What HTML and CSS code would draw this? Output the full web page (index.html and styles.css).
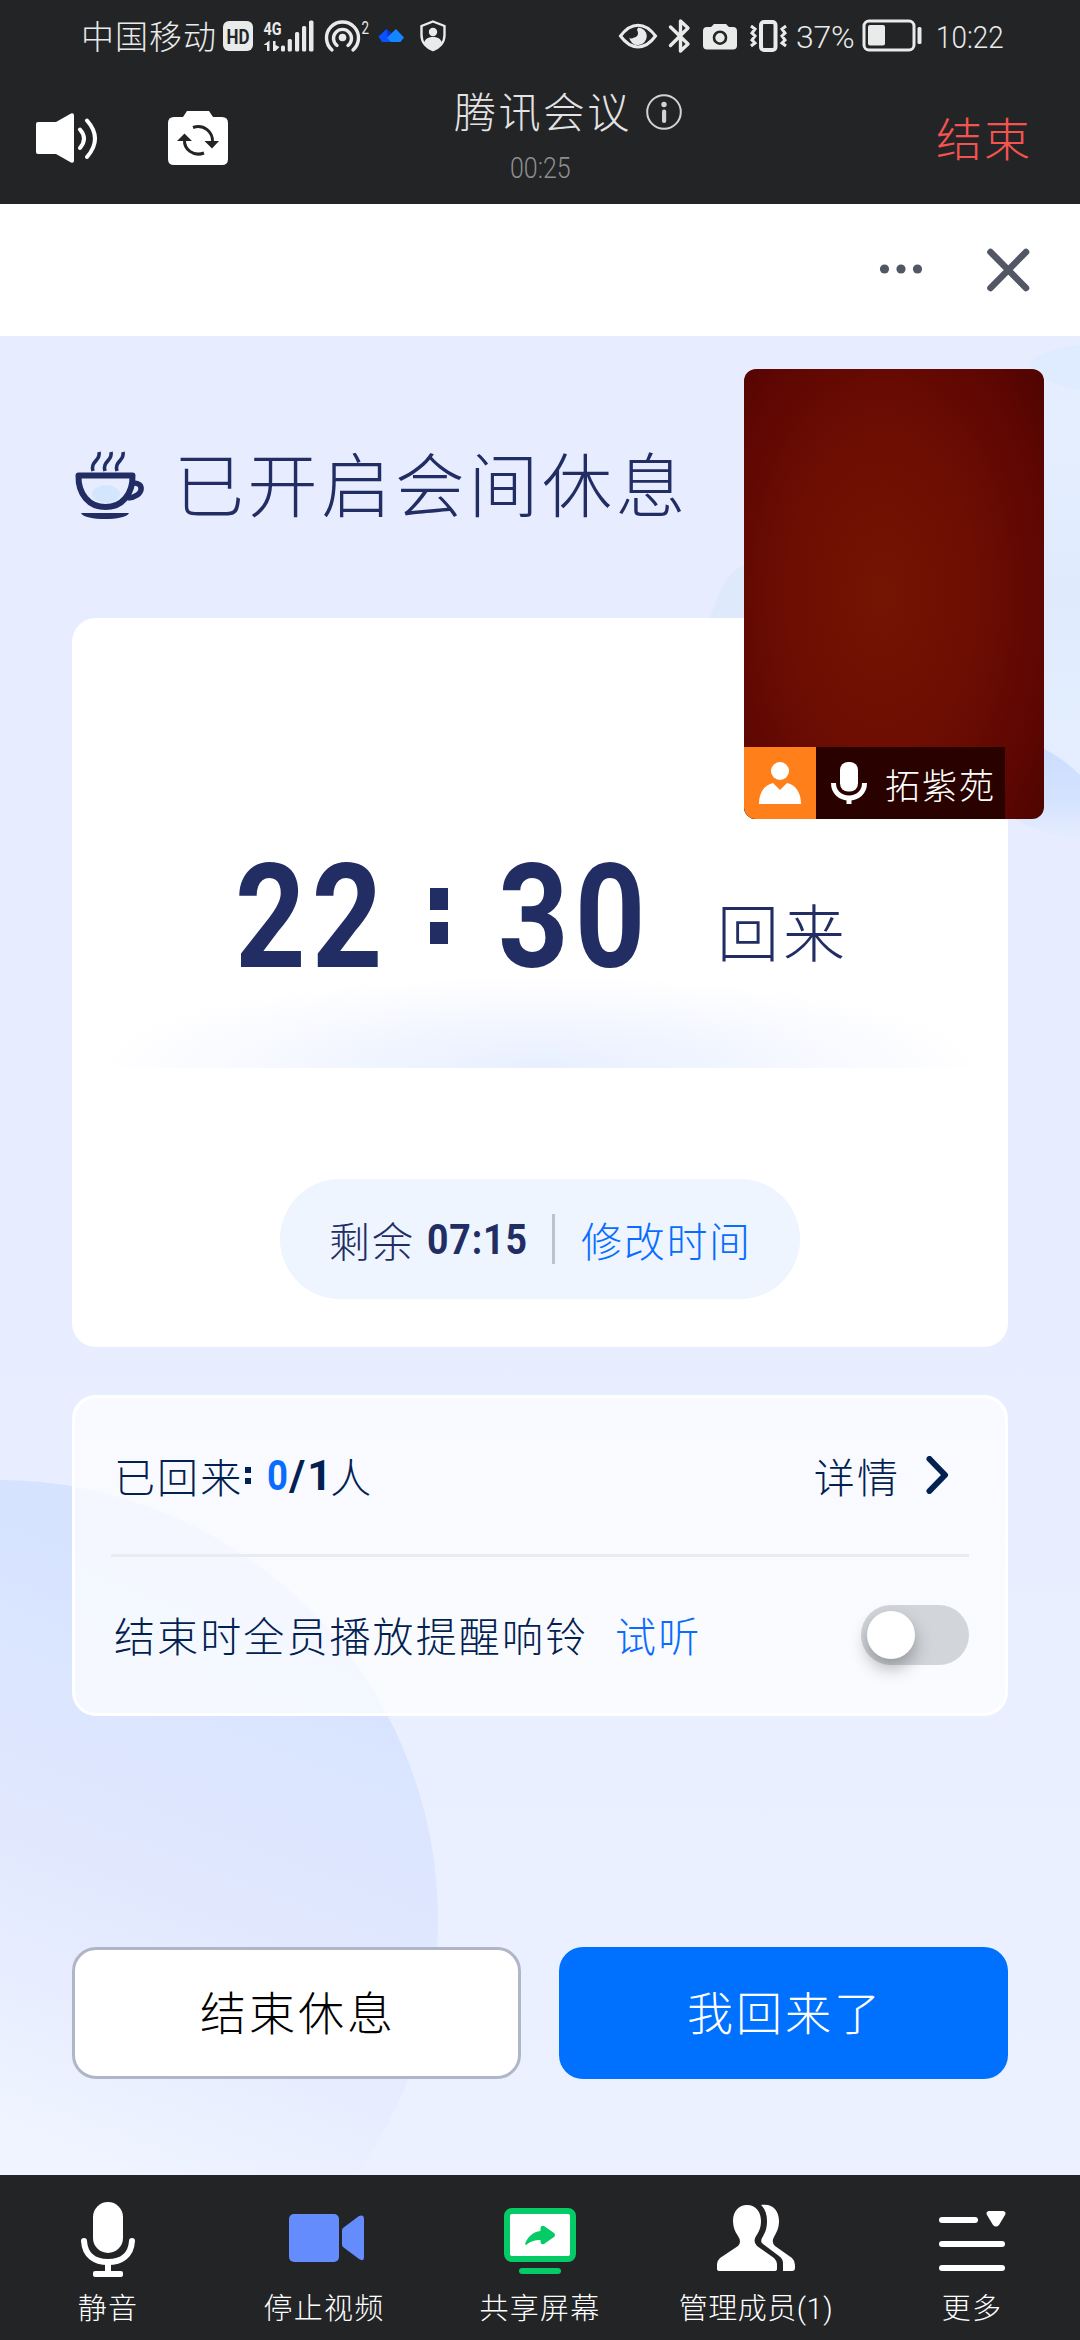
FILE: index.html
```html
<!DOCTYPE html>
<html lang="zh-CN">
<head>
<meta charset="utf-8">
<title>腾讯会议</title>
<link rel="stylesheet" href="styles.css">
</head>
<body>
<div class="screen">
  <div class="status">
    <span class="carrier">中国移动</span>
    <svg class="status-left" width="230" height="40" viewBox="220 17 230 40" fill="#e9eaea">
      <rect x="223" y="21" width="30" height="30" rx="6"/>
      <text x="238" y="43.500" class="hd" textLength="23" lengthAdjust="spacingAndGlyphs">HD</text>
      <text x="263.500" y="35" class="net" textLength="18" lengthAdjust="spacingAndGlyphs">4G</text>
      <path d="M267 51V45H263.500L269.500 40.500V51ZM273 41H275.500V45L279.500 47L275.500 51H273Z"/>
      <rect x="281" y="45.500" width="4" height="6" rx="1.500"/><rect x="287.700" y="39" width="4.200" height="12.500" rx="1.500"/>
      <rect x="295" y="32" width="4.200" height="19.500" rx="1.500"/><rect x="302" y="26" width="4.200" height="25.500" rx="1.500"/>
      <rect x="309" y="20.500" width="4.500" height="31" rx="1.500"/>
      <g fill="none" stroke="#e9eaea" stroke-width="3.400" stroke-linecap="round">
        <path d="M332 50A16 16 0 1 1 353 50"/><path d="M337 45.500A9 9 0 1 1 348 45.500"/>
      </g>
      <circle cx="342.500" cy="37.500" r="3.800"/>
      <text x="361.500" y="34" class="sup" textLength="7.500" lengthAdjust="spacingAndGlyphs">2</text>
      <path d="M378.500 36.500L386.500 29L394 36.500L389 42H382Z" fill="#0a52ff"/>
      <path d="M387 37.500L396 29L404 37.500L400.500 42H390.500Z" fill="#1487ff"/>
      <path d="M386.500 29L391.300 33.500L387.500 37Z" fill="#0a35d8"/>
      <path d="M433 21.500L444.500 26V35C444.500 43 439 48 433 50C427 48 421.500 43 421.500 35V26Z" fill="none" stroke="#e9eaea" stroke-width="2.400"/>
      <circle cx="433" cy="32" r="4.200"/><path d="M424 43C425 38.500 429 37 433 37S441 38.500 442 43C440 47 436 49.500 433 51C430 49.500 426 47 424 43Z"/>
    </svg>
    <svg class="status-mid" width="174" height="40" viewBox="616 17 174 40" fill="#e9eaea">
      <path d="M620.500 36C631 21.500 645 21.500 655.500 36C645 50.500 631 50.500 620.500 36Z" fill="none" stroke="#e9eaea" stroke-width="3"/>
      <path d="M638 27.500A8.800 8.800 0 1 1 629.200 37C630 39 632 39 634 37.500C638 37 639 33 637 30Z"/>
      <path d="M670.500 27L688 44L680.500 51V21L688 28L670.500 45.500" fill="none" stroke="#e9eaea" stroke-width="3.400" stroke-linejoin="round" stroke-linecap="round"/>
      <path d="M707 27H711L714 24H726L729 27H733Q737 27 737 31V45.500Q737 49.500 733 49.500H707Q703 49.500 703 45.500V31Q703 27 707 27Z"/>
      <circle cx="720" cy="37.700" r="6" fill="none" stroke="#232426" stroke-width="2.600"/>
      <rect x="761" y="22" width="14.500" height="28" rx="3" fill="none" stroke="#e9eaea" stroke-width="4"/>
      <path d="M751 26L755 29L752 33L755 36L752 40L755 43L751 46M786 26L782 29L785 33L782 36L785 40L782 43L786 46" fill="none" stroke="#e9eaea" stroke-width="3"/>
    </svg>
    <span class="percent">37%</span>
    <svg class="battery" width="58" height="34" viewBox="861 19 58 34" fill="#e9eaea">
      <rect x="863" y="22" width="50" height="29" rx="5" fill="none" stroke="#e9eaea" stroke-width="3"/>
      <rect x="867" y="26" width="17" height="20.500" rx="2"/><rect x="916.500" y="28" width="4" height="17" rx="1.500"/>
    </svg>
    <span class="clock">10:22</span>
  </div>

  <header class="topbar">
    <svg class="speaker" width="64" height="54" viewBox="35 111 64 54">
      <path d="M38 122H56L71 113.500Q74 112.500 74 115.500V160.500Q74 163.500 71 162.500L56 154H38Q36 154 36 152V124Q36 122 38 122Z" fill="#fff"/>
      <path d="M80 129.500Q88 138.500 80 148M87 120.500Q103 138.500 87 157" fill="none" stroke="#fff" stroke-width="4" stroke-linecap="round"/>
    </svg>
    <svg class="flip" width="62" height="56" viewBox="167 110 62 56">
      <path d="M174 117H183L187 111H209L213 117H222Q228 117 228 123V159Q228 165 222 165H174Q168 165 168 159V123Q168 117 174 117Z" fill="#fff"/>
      <g fill="none" stroke="#232426" stroke-width="3"><path d="M193 127.500C204 124 213 132 212.500 142"/><path d="M204 153C193 157 184 149 184.500 140"/></g>
      <path d="M204.500 141H219L212 148.500ZM177 141L184.500 133.500L192 141Z" fill="#232426"/>
    </svg>
    <div class="meeting">
      <div class="title-row"><span class="title">腾讯会议</span>
        <svg width="38" height="38" viewBox="0 0 38 38" fill="#d3d3d4"><circle cx="19" cy="19" r="16.800" fill="none" stroke="#d3d3d4" stroke-width="2"/><circle cx="19" cy="11.500" r="2.700"/><rect x="17" y="16.500" width="4.200" height="13.500" rx="2"/></svg>
      </div>
      <div class="elapsed">00:25</div>
    </div>
    <span class="leave">结束</span>
  </header>

  <div class="webbar">
    <svg width="44" height="12" viewBox="0 0 44 12" fill="#525766"><circle cx="5.500" cy="6" r="4.600"/><circle cx="22" cy="6" r="4.600"/><circle cx="38.500" cy="6" r="4.600"/></svg>
    <svg width="44" height="44" viewBox="0 0 44 44"><path d="M4.500 4L40 40M40 4L4.500 40" stroke="#525766" stroke-width="6.600" stroke-linecap="round"/></svg>
  </div>

  <main class="page">
    <svg class="decor" width="1080" height="1839" viewBox="0 336 1080 1839">
      <defs>
        <linearGradient id="ball" gradientUnits="userSpaceOnUse" x1="330" y1="1640" x2="120" y2="2180"><stop offset="0" stop-color="#d6e3ff"/><stop offset=".5" stop-color="#e1e8fe"/><stop offset="1" stop-color="#eff4ff"/></linearGradient>
        <linearGradient id="wedge" x1="0" y1="0" x2="0" y2="1"><stop offset="0" stop-color="#cadcff"/><stop offset=".6" stop-color="#d5e3ff"/><stop offset="1" stop-color="#e6edfe"/></linearGradient>
        <linearGradient id="tint" x1="0" y1="0" x2="0" y2="1"><stop offset="0" stop-color="#e7efff"/><stop offset=".5" stop-color="#dfebfd"/><stop offset="1" stop-color="#e6efff"/></linearGradient>
      </defs>
      <circle cx="-2" cy="1920" r="440" fill="url(#ball)"/>
      <path d="M1080 345C1060 348 1040 355 1030 370V740L1080 840Z" fill="url(#tint)"/>
      <path d="M1030 362Q1045 348 1080 345V390Q1050 384 1030 372Z" fill="#dfebfe"/>
      <path d="M1030 742Q1060 755 1080 775V840Q1040 835 1008 815Z" fill="url(#wedge)"/>
      <path d="M710 618C718 592 728 570 745 565V618Z" fill="#deeafc"/>
    </svg>

    <h1 class="heading">
      <svg width="72" height="72" viewBox="73 449 72 72" fill="none" stroke="#222d64">
        <ellipse cx="106" cy="494" rx="14" ry="9" fill="#d4e6fd" stroke="none"/>
        <path d="M78.500 475.500H132.500C133 494 122 507 105.500 507S78 494 78.500 475.500Z" stroke-width="6" stroke-linejoin="round"/>
        <path d="M133 483C145 482 144 497 128 498" stroke-width="5.500"/>
        <path d="M81 513H129C126 521 84 521 81 513Z" fill="#222d64" stroke="none"/>
        <path d="M99 452C101 461 90 461 93 471M111 452C113 461 102 461 105 471M123 452C125 461 114 461 117 471" stroke-width="3.600"/>
      </svg>
      <span>已开启会间休息</span>
    </h1>

    <section class="card">
      <div class="return-time">
        <span class="big hours">22</span>
        <span class="colon"><i></i><i></i></span>
        <span class="big minutes">30</span>
        <span class="back">回来</span>
      </div>
      <div class="glow"></div>
      <div class="pill">
        <span class="remain">剩余</span><span class="countdown"><b>07:15</b></span><i class="bar"></i><a class="edit">修改时间</a>
      </div>
    </section>

    <section class="panel">
      <div class="row">
        <span class="label">已回来</span><b class="count"><span class="c-colon"><i></i><i></i></span><em>0</em><span class="slash">/</span><span class="total">1</span></b><span class="label">人</span>
        <span class="detail">详情</span>
        <svg width="26" height="38" viewBox="0 0 26 38"><path d="M4.500 3L20 19L4.500 35" fill="none" stroke="#022150" stroke-width="6" stroke-linecap="round" stroke-linejoin="round"/></svg>
      </div>
      <div class="row second">
        <span class="label">结束时全员播放提醒响铃</span><a class="listen">试听</a>
        <span class="toggle"><i></i></span>
      </div>
    </section>

    <div class="actions"><button class="btn ghost">结束休息</button><button class="btn primary">我回来了</button></div>

    <div class="video">
      <div class="nameplate">
        <span class="host"><svg width="42" height="42" viewBox="0 0 42 42" fill="#fff"><circle cx="21" cy="9" r="9"/><path d="M0 42C0 31 5 23 14 21L21 28L28 21C37 23 42 31 42 42Z"/></svg></span>
        <svg class="mic" width="36" height="42" viewBox="0 0 36 42"><rect x="9" y="0" width="18" height="29.500" rx="8" fill="#fff"/><path d="M2.500 21C2.500 30 9 36 18 36S33.500 30 33.500 21" fill="none" stroke="#fff" stroke-width="5"/><path d="M18 36V42" stroke="#fff" stroke-width="5"/></svg>
        <span class="name">拓紫苑</span>
      </div>
    </div>
  </main>

  <nav class="toolbar">
    <div class="tool">
      <svg width="80" height="80" viewBox="68 2200 80 80" fill="#fff"><rect x="93" y="2202" width="30" height="51" rx="15"/><path d="M84 2241C85 2256 95 2262 108 2262S131 2256 132 2241" fill="none" stroke="#fff" stroke-width="6" stroke-linecap="round"/><path d="M105 2262H111V2271H105Z"/><rect x="93" y="2271" width="30" height="6" rx="2"/></svg>
      <span>静音</span>
    </div>
    <div class="tool">
      <svg width="80" height="80" viewBox="284 2200 80 80" fill="#658cfc"><rect x="289" y="2214" width="50" height="48" rx="5"/><path d="M343 2228L359 2216Q364 2214 364 2219V2257Q364 2262 359 2259L343 2247Q342 2246 342 2244V2231Q342 2229 343 2228Z"/></svg>
      <span>停止视频</span>
    </div>
    <div class="tool">
      <svg width="80" height="80" viewBox="500 2200 80 80"><rect x="507" y="2211" width="66" height="48" rx="5" fill="#fff" stroke="#04cb66" stroke-width="6"/><rect x="519" y="2268" width="42" height="6" rx="3" fill="#04cb66"/><path d="M525 2244C528 2236 533 2232 540.500 2231V2228Q541 2225 544 2226L554 2233Q556 2235 554 2237L544 2244Q541 2245 540.500 2242V2240C535 2240 531 2241 526 2245Z" fill="#04cb66"/></svg>
      <span>共享屏幕</span>
    </div>
    <div class="tool">
      <svg width="80" height="80" viewBox="716 2200 80 80" fill="#fff"><path d="M747 2205C756 2205 761 2212 761 2221C761 2229 758 2233 755.500 2237Q753 2242 757 2246L774 2258Q777 2261 777 2264V2269Q777 2271 774 2271H720Q717 2271 717 2269V2264Q717 2261 720 2258L738 2246Q742 2242 738 2236C735 2232 733 2227 733 2221C733 2212 738 2205 747 2205Z"/><path d="M761 2205C773 2203 779 2211 779 2221C779 2229 776 2233 774 2237Q771 2242 775 2246L792 2258Q795 2261 795 2265V2268Q795 2271 792 2271H783V2263Q783 2259 779 2256L763 2244Q760 2242 762 2238C765 2233 767 2229 767 2221C767 2214 765 2209 761 2205Z"/></svg>
      <span class="members">管理成员(1)</span>
    </div>
    <div class="tool">
      <svg width="80" height="80" viewBox="932 2200 80 80" fill="#fff"><rect x="939" y="2217" width="39" height="6" rx="3"/><rect x="939" y="2241" width="66" height="6" rx="3"/><rect x="939" y="2265" width="66" height="6" rx="3"/><path d="M988.500 2211H1003.500Q1006.500 2212 1005 2215L999 2225Q996 2228 993 2225L987 2215Q985.500 2212 988.500 2211Z"/></svg>
      <span>更多</span>
    </div>
  </nav>
</div>
</body>
</html>
```
FILE: styles.css
```css
* { box-sizing: border-box; }
body { margin: 0; font-family: Roboto, "Noto Sans CJK SC", sans-serif; font-weight: 300; }
i, em { font-style: normal; display: block; }
svg { display: block; flex: none; }
span, a { white-space: nowrap; }
.screen { width: 1080px; height: 2340px; display: flex; flex-direction: column; overflow: hidden; }

.status { height: 74px; background: #232426; color: #e9eaea; display: flex; align-items: flex-start; }
.carrier { margin: 18px 0 0 81px; width: 139px; font-size: 33px; line-height: 40px; letter-spacing: 1px; }
.status-left { margin-top: 17px; }
.hd { font: 700 20px Roboto, sans-serif; text-anchor: middle; fill: #232426; }
.net { font: 700 19px Roboto, sans-serif; }
.sup { font: 400 18px Roboto, sans-serif; }
.status-mid { margin: 17px 0 0 166px; }
.percent { margin: 17px 0 0 6px; width: 65px; font-size: 32px; line-height: 40px; letter-spacing: -0.3px; }
.battery { margin: 18px 0 0 1px; overflow: visible; }
.clock { margin: 17px 0 0 16px; font-size: 32px; line-height: 40px; transform: scaleX(.87); transform-origin: left; }

.topbar { height: 130px; background: #232426; display: flex; align-items: flex-start; }
.speaker { margin: 37px 0 0 35px; }
.flip { margin: 36px 0 0 68px; }
.meeting { margin: 16px 0 0 224px; width: 236px; display: flex; flex-direction: column; }
.title-row { display: flex; align-items: center; height: 48px; color: #e3e3e4; }
.title { font-size: 42px; line-height: 50px; letter-spacing: 2.4px; width: 191px; margin-left: 1px; }
.title-row svg { margin-top: -4px; }
.elapsed { margin: 13px 0 0 57px; font-size: 29px; line-height: 34px; color: #8d8e90; transform: scaleX(.86); transform-origin: left; }
.leave { margin: 38px 0 0 247px; font-size: 46px; line-height: 56px; letter-spacing: 2px; color: #f65350; }

.webbar { height: 132px; background: #fff; display: flex; align-items: center; justify-content: flex-end; gap: 63px; padding: 0 50px 0 0; }
.webbar svg:first-child { margin-top: -3px; }

.page { position: relative; height: 1839px; background: linear-gradient(#e7edff 0, #e7edff 45%, #ebf1ff 100%); padding: 0 72px; }
.decor { position: absolute; left: 0; top: 0; }
.heading { position: relative; margin: 0; padding-top: 108px; height: 282px; display: flex; gap: 29px; padding-left: 1px; font-weight: 300; color: #222d64; }
.heading svg { margin-top: 5px; }
.heading span { font-size: 70px; line-height: 88px; letter-spacing: 3.6px; }

.card { position: relative; height: 729px; border-radius: 24px; background: #fff; color: #222d64; }
.return-time { height: 357px; display: flex; align-items: flex-start; padding-left: 163px; }
.big { margin-top: 219px; width: 147px; font-size: 145px; line-height: 160px; font-weight: 700; letter-spacing: 7px; transform: scaleX(.85); transform-origin: left; }
.colon { margin: 270px 0 0 48px; width: 18px; display: grid; gap: 12px; }
.colon i { width: 18px; height: 22px; background: #222d64; }
.minutes { margin-left: 50px; }
.back { margin: 280px 0 0 72px; font-size: 62px; line-height: 76px; letter-spacing: 4px; }
.glow { height: 93px; margin: 0 24px; background: radial-gradient(50% 100% at 50% 100%, #e7efff 0, #f1f5ff 40%, #fafbff 75%, #fff 100%); }
.pill { margin: 111px auto 0; width: 520px; height: 120px; border-radius: 60px; background: #eef5ff; display: flex; align-items: center; padding-left: 49px; font-size: 41px; }
.remain { width: 98px; letter-spacing: 2px; }
.countdown { width: 125px; }
.countdown b { display: inline-block; font-size: 43px; font-weight: 700; letter-spacing: 1px; transform: scaleX(.87); transform-origin: left; }
.bar { width: 3px; height: 50px; background: #bcc2d0; }
.edit { margin-left: 26px; letter-spacing: 1.700px; color: #0a6cff; }

.panel { position: relative; margin-top: 48px; height: 321px; border: 3px solid #fff; border-radius: 24px; background: rgba(255,255,255,.72); padding: 0 36px; color: #022150; font-size: 41px; letter-spacing: 2.100px; }
.row { height: 156px; padding: 0 18px 2px 3px; display: flex; align-items: center; }
.second { height: 159px; padding: 0 0 0 3px; border-top: 3px solid #e9ebf1; }
.second .label, .listen { margin-top: -3px; }
.count { display: flex; align-items: center; font-size: 43px; font-weight: 700; letter-spacing: 0; }
.c-colon { display: grid; gap: 5px; margin: 0 16px 0 2px; }
.c-colon i { width: 6px; height: 6px; background: #022150; }
.count em { color: #0a6cff; transform: scaleX(.85); transform-origin: left; width: 22px; }
.slash { width: 18px; }
.total { width: 23px; }
.detail { margin-left: auto; margin-right: 25px; }
.listen { margin-left: 27px; color: #0a6cff; }
.toggle { margin-left: auto; width: 108px; height: 60px; border-radius: 30px; background: #d2d5da; padding: 6px; }
.toggle i { width: 48px; height: 48px; border-radius: 50%; background: #fff; box-shadow: 0 9px 18px rgba(0,0,0,.3); }

.actions { position: relative; margin-top: 231px; display: flex; justify-content: space-between; }
.btn { width: 449px; height: 132px; border-radius: 24px; border: 3px solid #b0b6c6; background: #fff; color: #000; font: 300 46px Roboto, "Noto Sans CJK SC", sans-serif; letter-spacing: 3px; padding: 0 0 7px 3px; }
.primary { background: #0070ff; border: 0; color: #fff; }

.video { position: absolute; left: 744px; top: 33px; width: 300px; height: 450px; border-radius: 12px; overflow: hidden; background: radial-gradient(75% 85% at 46% 50%, #741402 0, #6e0e03 40%, #5d0602 75%, #480402 100%); display: flex; align-items: flex-end; }
.nameplate { width: 261px; height: 72px; background: #290200; display: flex; align-items: center; }
.host { width: 72px; height: 72px; background: #ff801b; display: grid; place-items: center; }
.mic { margin-left: 15px; }
.name { margin: 0 0 0 18px; color: #fff; font-size: 35px; letter-spacing: 2px; }

.toolbar { height: 165px; background: #232426; color: #fff; display: grid; grid-template-columns: repeat(5, 216px); }
.tool { display: flex; flex-direction: column; align-items: center; padding-top: 25px; font-size: 29px; letter-spacing: 1.300px; line-height: 40px; }
.tool span { margin-top: 9px; }
.tool .members { letter-spacing: .5px; }
```
